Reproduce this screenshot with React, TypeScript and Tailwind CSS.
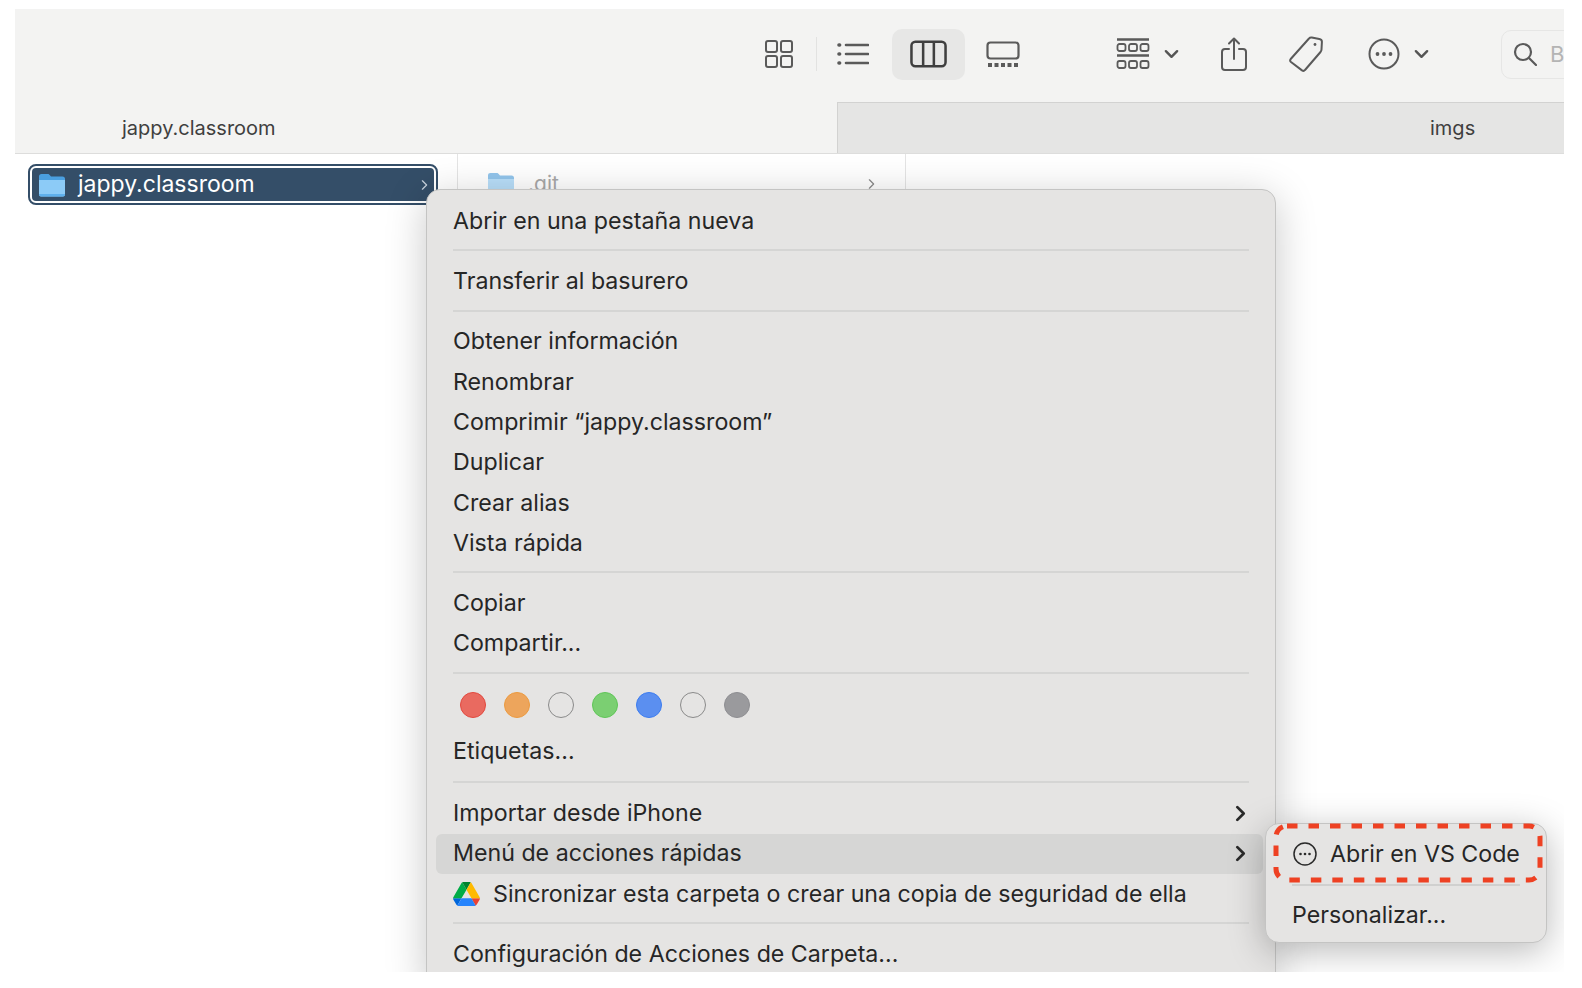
const font = { fontFamily: '"Inter", "Liberation Sans", sans-serif' }

function Folder({ className }: { className: string }) {
  return (
    <svg viewBox="0 0 28 24" className={className}>
      <path d="M1 3.5A2.5 2.5 0 0 1 3.5 1h6.2c1 0 1.5.4 2.2 1.2L13 3.5h11.5A2.5 2.5 0 0 1 27 6v2H1z" fill="#4a9fe0" />
      <path d="M1 7h26v14.5a2 2 0 0 1-2 2H3a2 2 0 0 1-2-2z" fill="#8ccbf7" />
      <path d="M1 21h26v.5a2 2 0 0 1-2 2H3a2 2 0 0 1-2-2z" fill="#5fb0ec" />
    </svg>
  )
}

function Chevron({ className, color = "#2a2a2a", width = 2.6 }: { className: string; color?: string; width?: number }) {
  return (
    <svg viewBox="0 0 10 16" className={className} fill="none" stroke={color} strokeWidth={width} strokeLinecap="round" strokeLinejoin="round">
      <path d="M2 2l6 6-6 6" />
    </svg>
  )
}

function ChevronDown() {
  return (
    <svg viewBox="0 0 16 10" className="w-[15px] h-[10px]" fill="none" stroke="#555" strokeWidth="2.6" strokeLinecap="round" strokeLinejoin="round">
      <path d="M2 2l6 6 6-6" />
    </svg>
  )
}

function Toolbar() {
  return (
    <div className="h-[93px] bg-[#f3f3f2] flex items-center pb-[3px] pl-[749px] text-[#5a5a5a] overflow-hidden">
      <svg viewBox="0 0 30 28" className="shrink-0 w-[30px] h-[28px]" fill="none" stroke="currentColor" strokeWidth="2">
        <rect x="2" y="1" width="11" height="11" rx="2" />
        <rect x="17" y="1" width="11" height="11" rx="2" />
        <rect x="2" y="16" width="11" height="11" rx="2" />
        <rect x="17" y="16" width="11" height="11" rx="2" />
      </svg>
      <div className="shrink-0 w-px h-[34px] bg-[#e2e2e1] ml-[22px]" />
      <svg viewBox="0 0 32 24" className="shrink-0 w-[32px] h-[24px] ml-[20px]" fill="none" stroke="currentColor" strokeWidth="2.6" strokeLinecap="round">
        <path d="M9 3h22M9 12h22M9 21h22" />
        <path d="M2 3h.6M2 12h.6M2 21h.6" strokeWidth="3.6" />
      </svg>
      <div className="shrink-0 w-[73px] h-[51px] ml-[23px] rounded-[10px] bg-[#e7e7e6] flex items-center justify-center">
        <svg viewBox="0 0 38 28" className="w-[37px] h-[28px]" fill="none" stroke="#3f3f3f" strokeWidth="2.6">
          <rect x="1.5" y="1.5" width="35" height="25" rx="4" />
          <path d="M13.5 1.5v25M24.5 1.5v25" />
        </svg>
      </div>
      <svg viewBox="0 0 34 26" className="shrink-0 w-[34px] h-[26px] ml-[21px]" fill="none" stroke="currentColor" strokeWidth="2.2">
        <rect x="1.5" y="1.5" width="31" height="16" rx="3" />
        <path d="M2 24h30" strokeWidth="4" strokeDasharray="4 2.5" />
      </svg>
      <svg viewBox="0 0 34 32" className="shrink-0 w-[34px] h-[32px] ml-[96px]" fill="none" stroke="currentColor" strokeWidth="1.8">
        <path d="M1 1.5h32M1 17.5h32" strokeWidth="2.4" />
        <rect x="1.5" y="6" width="8" height="7" rx="2" />
        <rect x="13" y="6" width="8" height="7" rx="2" />
        <rect x="24.5" y="6" width="8" height="7" rx="2" />
        <rect x="1.5" y="23" width="8" height="7" rx="2" />
        <rect x="13" y="23" width="8" height="7" rx="2" />
        <rect x="24.5" y="23" width="8" height="7" rx="2" />
      </svg>
      <div className="shrink-0 ml-[14px]"><ChevronDown /></div>
      <svg viewBox="0 0 26 34" className="shrink-0 w-[26px] h-[34px] ml-[42px]" fill="none" stroke="currentColor" strokeWidth="2" strokeLinecap="round" strokeLinejoin="round">
        <path d="M8 12H4a3 3 0 0 0-3 3v15a3 3 0 0 0 3 3h18a3 3 0 0 0 3-3V15a3 3 0 0 0-3-3h-4" />
        <path d="M13 22V2M8 6.5L13 1.5l5 5" />
      </svg>
      <svg viewBox="0 0 34 36" className="shrink-0 w-[34px] h-[36px] ml-[42px]" fill="none" stroke="currentColor" strokeWidth="2" strokeLinejoin="round">
        <path d="M20 2.5c.8-1 1.6-1.2 2.8-1l7.5 1.5c1.6.3 2.7 1.4 2.6 3l-.4 7.5c0 1-.4 1.7-1 2.5L16 34c-.8 1-2 1-3 .4L2 26c-1-.8-1-2-.3-3z" />
        <circle cx="26" cy="8.5" r="1.4" fill="currentColor" stroke="none" />
      </svg>
      <svg viewBox="0 0 32 32" className="shrink-0 w-[32px] h-[32px] ml-[45px]" fill="none" stroke="currentColor" strokeWidth="2">
        <circle cx="16" cy="16" r="14.5" />
        <circle cx="9.5" cy="16" r="1.9" fill="currentColor" stroke="none" />
        <circle cx="16" cy="16" r="1.9" fill="currentColor" stroke="none" />
        <circle cx="22.5" cy="16" r="1.9" fill="currentColor" stroke="none" />
      </svg>
      <div className="shrink-0 ml-[14px]"><ChevronDown /></div>
      <div className="shrink-0 w-[200px] h-[49px] ml-[72px] rounded-[10px] border border-[#e6e6e5] flex items-center pl-[11px] gap-[13px]">
        <svg viewBox="0 0 24 24" className="shrink-0 w-[24px] h-[24px]" fill="none" stroke="currentColor" strokeWidth="2.2" strokeLinecap="round">
          <circle cx="10" cy="10" r="8" />
          <path d="M16 16l7 7" />
        </svg>
        <span className="text-[22px] text-[#b4b4b4]" style={font}>Buscar</span>
      </div>
    </div>
  )
}

function Tabs() {
  return (
    <div className="h-[52px] flex text-[20px] leading-[52px] text-[#3f3f3f] border-b border-[#dddddc]">
      <div className="w-[822px] bg-[#f3f3f2] pl-[107px]">jappy.classroom</div>
      <div className="flex-1 bg-[#e5e5e4] border-l border-t border-[#d2d2d1] pl-[592px] leading-[50px]">imgs</div>
    </div>
  )
}

function Columns() {
  return (
    <div className="flex h-[818px] bg-white">
      <div className="w-[443px] border-r border-[#e4e4e4] pl-[13px] pt-[10px]">
        <div className="w-[410px] h-[41px] border-2 border-[#344e68] rounded-[8px] p-[2px]">
          <div className="h-full bg-[#344e68] rounded-[4px] flex items-center pl-[6px] pr-[6px] text-white text-[23px]">
            <Folder className="shrink-0 w-[28px] h-[24px]" />
            <span className="ml-[12px] flex-1">jappy.classroom</span>
            <Chevron className="w-[7px] h-[12px]" color="#c8d2dc" width={1.8} />
          </div>
        </div>
      </div>
      <div className="w-[448px] border-r border-[#e4e4e4] pl-[29px] pr-[30px] pt-[16px]">
        <div className="h-[28px] flex items-center text-[#a8a8a8] text-[21px]">
          <Folder className="shrink-0 w-[28px] h-[24px] opacity-60" />
          <span className="ml-[13px] flex-1">.git</span>
          <Chevron className="w-[7px] h-[12px]" color="#8a8a8a" width={1.8} />
        </div>
      </div>
    </div>
  )
}

function Item({ label, arrow, active }: { label: string; arrow?: boolean; active?: boolean }) {
  return (
    <div className={`h-[40.3px] pl-[17px] pr-[17px] flex items-center rounded-[6px] ${active ? "bg-[#d6d6d5]" : ""}`}>
      <span className="flex-1">{label}</span>
      {arrow && <Chevron className="w-[11px] h-[17px]" />}
    </div>
  )
}

function Sep() {
  return (
    <div className="h-[20px] pl-[17px] pr-[14px] pb-[2px] flex items-center">
      <div className="w-full h-[2px] bg-[#d5d5d4]" />
    </div>
  )
}

const tagColors = [
  "bg-[#e96a60] border-[#e2483e]",
  "bg-[#eda55c] border-[#ec9a3f]",
  "bg-transparent border-[#8a8a8a]",
  "bg-[#7bcf72] border-[#5ec656]",
  "bg-[#5b8ff0] border-[#3b7cf0]",
  "bg-transparent border-[#8a8a8a]",
  "bg-[#9a9a9d] border-[#8e8e92]",
]

function DriveIcon() {
  return (
    <svg viewBox="0 0 87.3 78" className="shrink-0 w-[27px] h-[24px]">
      <path d="M6.6 66.85l3.85 6.65c.8 1.4 1.95 2.5 3.3 3.3L27.5 53H0c0 1.55.4 3.1 1.2 4.5z" fill="#0066da" />
      <path d="M43.65 25L29.9 1.2c-1.35.8-2.5 1.9-3.3 3.3L1.2 48.5C.4 49.9 0 51.45 0 53h27.5z" fill="#00ac47" />
      <path d="M73.55 76.8c1.35-.8 2.5-1.9 3.3-3.3l1.6-2.75 7.65-13.25c.8-1.4 1.2-2.95 1.2-4.5H59.8l5.85 11.5z" fill="#ea4335" />
      <path d="M43.65 25L57.4 1.2C56.05.4 54.5 0 52.9 0H34.4c-1.6 0-3.15.45-4.5 1.2z" fill="#00832d" />
      <path d="M59.8 53H27.5L13.75 76.8c1.35.8 2.9 1.2 4.5 1.2h50.8c1.6 0 3.15-.45 4.5-1.2z" fill="#2684fc" />
      <path d="M73.4 26.5L60.7 4.5c-.8-1.4-1.95-2.5-3.3-3.3L43.65 25 59.8 53h27.45c0-1.55-.4-3.1-1.2-4.5z" fill="#ffba00" />
    </svg>
  )
}

function ContextMenu() {
  return (
    <div className="absolute left-[411px] top-[180px] w-[850px] h-[800px] bg-[#e5e4e3] border border-[#c4c4c3] rounded-[14px] shadow-[0_8px_40px_rgba(0,0,0,0.22)] pt-[11px] pl-[9px] pr-[12px] text-[23.2px] text-[#262626]">
      <Item label="Abrir en una pestaña nueva" />
      <Sep />
      <Item label="Transferir al basurero" />
      <Sep />
      <Item label="Obtener información" />
      <Item label="Renombrar" />
      <Item label="Comprimir “jappy.classroom”" />
      <Item label="Duplicar" />
      <Item label="Crear alias" />
      <Item label="Vista rápida" />
      <Sep />
      <Item label="Copiar" />
      <Item label="Compartir..." />
      <Sep />
      <div className="h-[47px] pl-[24px] pb-[4px] flex items-center gap-[18px]">
        {tagColors.map((c, i) => (
          <div key={i} className={`w-[26px] h-[26px] rounded-full border-[1.5px] ${c}`} />
        ))}
      </div>
      <Item label="Etiquetas..." />
      <div className="h-[2px]" />
      <Sep />
      <Item label="Importar desde iPhone" arrow />
      <Item label="Menú de acciones rápidas" arrow active />
      <div className="h-[40.3px] pl-[17px] flex items-center">
        <DriveIcon />
        <span className="ml-[13px]">Sincronizar esta carpeta o crear una copia de seguridad de ella</span>
      </div>
      <Sep />
      <Item label="Configuración de Acciones de Carpeta..." />
    </div>
  )
}

function SubMenu() {
  return (
    <div className="absolute left-[1250px] top-[814px] w-[282px] h-[120px] bg-[#e5e4e3] border border-[#c4c4c3] rounded-[14px] shadow-[0_8px_36px_rgba(0,0,0,0.28)] text-[23.2px] text-[#262626]">
      <div className="h-[60px] pl-[27px] flex items-center">
        <svg viewBox="0 0 24 24" className="shrink-0 w-[24px] h-[24px]" fill="none" stroke="#2a2a2a" strokeWidth="1.5">
          <circle cx="12" cy="12" r="11" />
          <circle cx="7.5" cy="12" r="1.3" fill="#2a2a2a" stroke="none" />
          <circle cx="12" cy="12" r="1.3" fill="#2a2a2a" stroke="none" />
          <circle cx="16.5" cy="12" r="1.3" fill="#2a2a2a" stroke="none" />
        </svg>
        <span className="ml-[13px]">Abrir en VS Code</span>
      </div>
      <div className="mx-[26px] h-[2px] bg-[#d0d0cf]" />
      <div className="h-[58px] pl-[26px] flex items-center">Personalizar...</div>
    </div>
  )
}

export default function App() {
  return (
    <div className="w-[1582px] h-[988px] bg-white overflow-hidden pt-[9px] pl-[15px]" style={font}>
      <div className="relative w-[1549px] h-[963px] overflow-hidden">
        <Toolbar />
        <Tabs />
        <Columns />
        <ContextMenu />
        <SubMenu />
        <svg className="absolute left-[1258px] top-[814px] w-[270px] h-[64px]" viewBox="0 0 270 64" fill="none">
          <rect x="3" y="3" width="264" height="54" rx="11" stroke="#ee4123" strokeWidth="5" strokeDasharray="10.5 11" />
        </svg>
      </div>
    </div>
  )
}
